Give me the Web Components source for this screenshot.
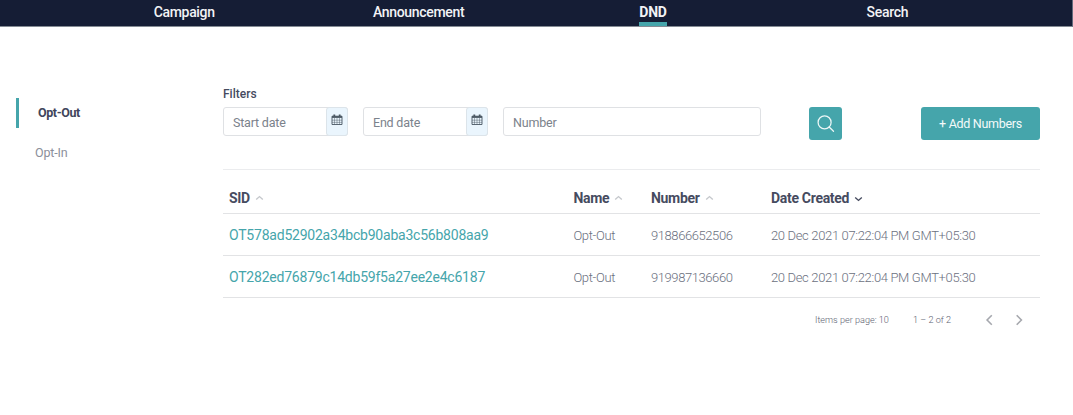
<!DOCTYPE html>
<html lang="en">
<head>
<meta charset="utf-8">
<title>DND</title>
<style>
html,body{margin:0;height:100%;background:#fff;overflow:hidden}
body{font-family:Roboto,"Liberation Sans",sans-serif;color:#464b5f}
</style>
</head>
<body>
<dnd-page></dnd-page>
<script>
const define = (name, html) => customElements.define(name, class extends HTMLElement {
  connectedCallback() {
    if (this.shadowRoot) return;
    const t = document.createElement('template');
    t.innerHTML = html;
    this.attachShadow({ mode: 'open' }).append(t.content.cloneNode(true));
  }
});

define('nav-item', `<style>
:host{display:flex;justify-content:center;height:26px;color:#f2f3f6;font-size:14px;line-height:24px;white-space:nowrap}
span{box-sizing:border-box;height:26px;font-weight:500;letter-spacing:-.32px}
:host([active]) span{font-weight:700;letter-spacing:-.2px;border-bottom:4px solid #45a5ab}
</style><span><slot></slot></span>`);

define('top-nav', `<style>
:host{display:grid;grid-template-columns:repeat(4,234.4px);box-sizing:border-box;height:27px;width:1073px;padding-left:67px;background:#151d35;border-bottom:1px solid #848b94;border-right:1px solid #646a7c}
</style><slot></slot>`);

define('side-link', `<style>
:host{display:flex;align-items:center;height:30px;padding-bottom:1px;box-sizing:border-box;font-size:12.5px;letter-spacing:-.15px;color:#8b8f9b;padding-left:19px}
:host([active]){border-left:3px solid #45a5ab;font-weight:700;letter-spacing:-.4px;color:#3f455b}
</style><span><slot></slot></span>`);

define('text-field', `<style>
:host{display:flex;box-sizing:border-box;height:29px;border:1px solid #dfe1e4;border-radius:3px;font-size:12.5px;letter-spacing:-.2px;color:#7b828b;line-height:29px;background:#fff}
.t{flex:1;padding-left:9px;white-space:nowrap}
.c{display:none}
:host([date]) .c{display:block;box-sizing:border-box;width:22px;height:29px;margin:-1px -1px 0 0;background:#eaf5fd;border:1px solid #dce4ea;border-radius:3px;padding:6px 0 0 4px}
svg{display:block}
</style><span class="t"><slot></slot></span><span class="c"><svg width="12" height="12" viewBox="0 0 12 12" fill="none" stroke="#4a5763"><path d="M1 2.2h10v8.3H1z" stroke-width=".9"/><path d="M1 3h10" stroke-width="1.8"/><path d="M3.3 .5v2M8.7 .5v2" stroke-width="1.8"/><path d="M3.5 4v6.5M6 4v6.5M8.5 4v6.5M1 6.2h10M1 8.4h10" stroke-width=".45"/></svg></span>`);

define('action-button', `<style>
:host{display:flex;align-items:center;justify-content:center;box-sizing:border-box;background:#45a5ab;border-radius:3px;color:#f4fafa;font-size:12.5px;white-space:nowrap}
</style><slot></slot>`);

define('search-icon', `<style>:host{display:block;width:18px;height:18px}svg{display:block}</style>
<svg width="18" height="18" viewBox="0 0 18 18" fill="none" stroke="#edf7f7" stroke-width="1.25" stroke-linecap="round"><circle cx="7.6" cy="7.4" r="6.5"/><path d="M12.2 12l4.3 4.3"/></svg>`);

define('filter-bar', `<style>
:host{display:block;height:82px;border-bottom:1px solid #ebecee}
.l{font-size:12px;font-weight:500;line-height:15px;height:20px;color:#464b5f}
.r{display:flex;align-items:flex-start}
.s{width:125px;margin-right:15px}.n{width:258px}
.b{width:33px;height:33px;margin-left:48px}
.a{width:119px;height:33px;margin-left:auto;letter-spacing:-.3px}
</style><div class="l">Filters</div><div class="r">
<text-field class="s" date>Start date</text-field><text-field class="s" date>End date</text-field><text-field class="n">Number</text-field>
<action-button class="b"><search-icon></search-icon></action-button><action-button class="a">+ Add Numbers</action-button></div>`);

define('sort-header', `<style>
:host{display:flex;align-items:center;font-size:14px;letter-spacing:-.3px;font-weight:700;color:#464b5f;white-space:nowrap}
svg{margin:1px 0 0 5px;color:#c5c8cc}
:host([desc]) svg{transform:rotate(180deg);color:#464b5f;margin-top:3px}
</style><slot></slot><svg width="9" height="6" viewBox="0 0 9 6" fill="none" stroke="currentColor" stroke-width="1.4"><path d="M1.2 4.6L4.5 1.6l3.3 3"/></svg>`);

define('table-row', `<style>
:host{display:grid;grid-template-columns:344.4px 77.6px 120px 1fr;align-items:center;box-sizing:border-box;height:42px;padding:1px 0 0 6px;border-bottom:1px solid #e2e3e5;font-size:13px;letter-spacing:-.34px;font-weight:300;color:#6b7080;white-space:nowrap}
:host([head]){height:44px;padding-top:12px}
::slotted(a){color:#45a5ab;font-weight:400;font-size:14px;letter-spacing:-.22px}
::slotted(span:nth-of-type(2)){letter-spacing:-.42px}
</style><slot></slot>`);

define('page-controls', `<style>
:host{display:flex;align-items:center;height:43px;font-size:9.1px;font-weight:300;color:#5b6070;padding-left:592px;white-space:nowrap}
span{flex:none}.n{width:98px}.m{width:71px}
svg{display:block;flex:none;margin-top:1px}
svg+svg{margin-left:20px}
</style><span class="n">Items per page: 10</span><span class="m">1 – 2 of 2</span>
<svg width="10" height="12" viewBox="0 0 10 12" fill="none" stroke="#a6a8ae" stroke-width="1.6"><path d="M7.8 1.3L3.1 6l4.7 4.7"/></svg>
<svg width="10" height="12" viewBox="0 0 10 12" fill="none" stroke="#a6a8ae" stroke-width="1.6"><path d="M2.7 1.3L7.4 6l-4.7 4.7"/></svg>`);

define('dnd-page', `<style>
:host{display:block;width:1073px;height:415px}
.body{display:grid;grid-template-columns:207px 817px;padding-left:16px}
nav{padding-top:71px}
side-link[active]{margin-bottom:10px}
main{padding-top:60px;min-width:0}
</style>
<top-nav><nav-item>Campaign</nav-item><nav-item>Announcement</nav-item><nav-item active>DND</nav-item><nav-item>Search</nav-item></top-nav>
<div class="body"><nav><side-link active>Opt-Out</side-link><side-link>Opt-In</side-link></nav>
<main><filter-bar></filter-bar>
<table-row head><sort-header>SID</sort-header><sort-header>Name</sort-header><sort-header>Number</sort-header><sort-header desc>Date Created</sort-header></table-row>
<table-row><a>OT578ad52902a34bcb90aba3c56b808aa9</a><span>Opt-Out</span><span>918866652506</span><span>20 Dec 2021 07:22:04 PM GMT+05:30</span></table-row>
<table-row><a>OT282ed76879c14db59f5a27ee2e4c6187</a><span>Opt-Out</span><span>919987136660</span><span>20 Dec 2021 07:22:04 PM GMT+05:30</span></table-row>
<page-controls></page-controls></main></div>`);
</script>
</body>
</html>
